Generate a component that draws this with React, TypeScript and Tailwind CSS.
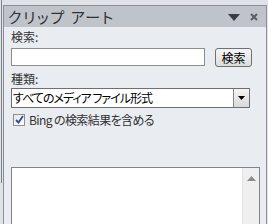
import React from "react";

const jp = "font-['Noto_Sans_CJK_JP','Noto_Sans',sans-serif] [font-feature-settings:'palt']";

export default function App() {
  return (
    <div className={`w-[268px] h-[224px] overflow-hidden bg-[#dfe2e6] flex text-[#222] ${jp}`}>
      {/* left edge of the neighbouring pane */}
      <div className="w-[1px]" />
      <div className="w-[1px] h-[183px] bg-[#7d828a]" />
      <div className="w-[1px]" />
      <div className="flex-1 flex flex-col mt-[5px] border-l border-t border-r border-[#8b9098] mr-[1px]">
        {/* title bar */}
        <div className="h-[21px] bg-[#bfc4ca] flex items-center pl-[4px] pr-[8px] shrink-0">
          <span className="text-[15px] leading-[20px] text-[#2f3134] tracking-[1.6px]">クリップ アート</span>
          <div className="ml-auto flex items-center gap-[10px]">
            <svg width="12" height="7" viewBox="0 0 12 7" className="mt-[1px]">
              <polygon points="0,0 12,0 6,7" fill="#3a3c40" />
            </svg>
            <svg width="8" height="8" viewBox="0 0 8 8">
              <path d="M1 1 L7 7 M7 1 L1 7" stroke="#5a5d62" strokeWidth="2" />
            </svg>
          </div>
        </div>
        {/* body */}
        <div className="flex-1 bg-[#e9ecf0] pl-[7px] flex flex-col text-[12px] overflow-hidden">
          <div className="mt-[2px] leading-[15px] text-[#333]">検索:</div>
          <div className="mt-[4px] flex items-start">
            <div className="w-[194px] h-[18px] bg-white border border-[#8e8f8f]" />
            <button className="ml-[10px] w-[37px] h-[19px] rounded-[3px] border border-[#707070] bg-gradient-to-b from-[#f6f6f6] to-[#dcdcdc] text-[12px] leading-[16px] text-black flex items-center justify-center">
              検索
            </button>
          </div>
          <div className="mt-[4px] leading-[15px] text-[#333]">種類:</div>
          <div className="mt-[2px] w-[239px] h-[20px] bg-white border border-[#6f6f6f] flex items-stretch">
            <span className="flex-1 pl-[1px] leading-[18px] text-black text-[12px] tracking-[-1px]">すべてのメディア ファイル形式</span>
            <div className="w-[16px] border-l border-[#8a8a8a] bg-gradient-to-b from-[#f4f4f4] to-[#d9d9d9] flex items-center justify-center">
              <svg width="7" height="4" viewBox="0 0 7 4">
                <polygon points="0,0 7,0 3.5,4" fill="#000" />
              </svg>
            </div>
          </div>
          <div className="mt-[4px] flex items-center pl-[2px]">
            <div className="w-[12px] h-[12px] border border-[#8f8f8f] bg-gradient-to-br from-[#e6e6e6] to-white flex items-center justify-center">
              <svg width="9" height="9" viewBox="0 0 9 9">
                <path d="M1 5 L3.5 7.5 L8 1" stroke="#2c4c96" strokeWidth="1.8" fill="none" />
              </svg>
            </div>
            <span className="ml-[4px] leading-[15px] text-[#333] tracking-[-0.6px]">Bing の検索結果を含める</span>
          </div>
          {/* results list */}
          <div className="mt-[40px] h-[80px] shrink-0 w-[249px] border border-[#7f848b] bg-white flex">
            <div className="flex-1" />
            <div className="w-[17px] bg-[#efefef] border-l border-[#e4e4e4] flex justify-center pt-[8px]">
              <svg width="9" height="5" viewBox="0 0 9 5" className="self-start">
                <polygon points="0,5 9,5 4.5,0" fill="#8c8c8c" />
              </svg>
            </div>
          </div>
        </div>
      </div>
    </div>
  );
}
